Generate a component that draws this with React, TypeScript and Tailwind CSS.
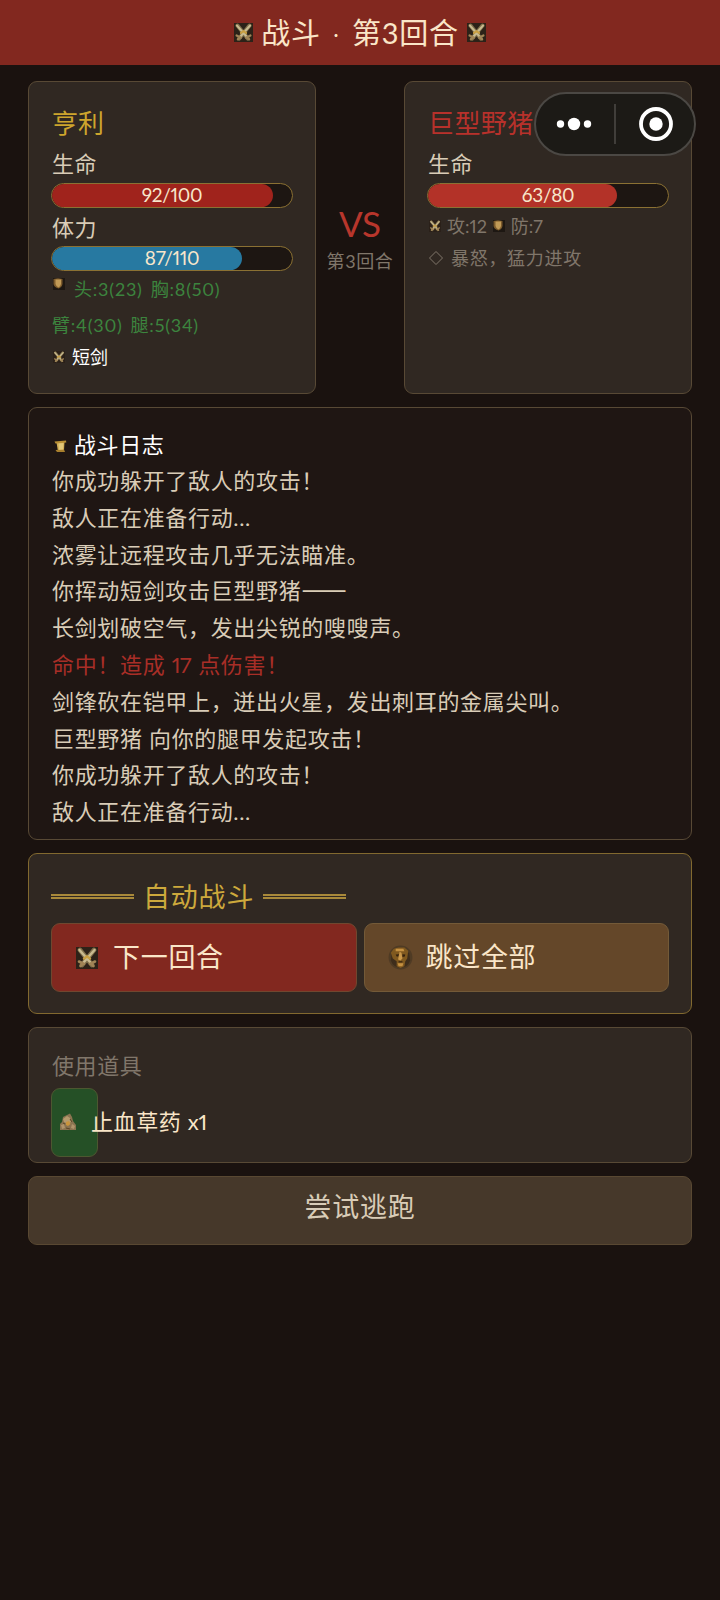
import { ReactNode } from 'react';

type IconProps = { size: number; className?: string };

function SwordsIcon({ size, framed = false, className = '' }: IconProps & { framed?: boolean }) {
  return (
    <svg width={size} height={size} viewBox="0 0 22 22" className={`shrink-0 ${className}`}>
      <rect width="22" height="22" fill={framed ? '#2c2218' : '#2a2019'} />
      <g strokeLinecap="round" fill="none">
        <path d="M4 3 L16 18 M18 3 L6 18" stroke="#81714c" strokeWidth="4.6" />
        <path d="M3.5 3 L14 15 M18.5 3 L8 15" stroke="#c9bb90" strokeWidth="2.4" />
        <path d="M3 14.5 L8 17 M19 14.5 L14 17 M4.5 19 L7 16.5 M17.5 19 L15 16.5" stroke="#a08456" strokeWidth="2.6" />
        <path d="M8 11.5 L11 9.5 L14 11.5" stroke="#c9a043" strokeWidth="2.4" />
      </g>
    </svg>
  );
}

function ShieldIcon({ size, className = '' }: IconProps) {
  return (
    <svg width={size} height={size} viewBox="0 0 12 12" className={`shrink-0 ${className}`}>
      <rect width="12" height="12" fill="#1d1712" />
      <path d="M0.5 1 L5 0.3 L9.5 1 V6 Q9 9 5.5 10.5 Q1 9 0.5 6 Z" fill="#7c5b2c" />
      <path d="M2.5 1.5 H8 V6 Q7.5 8.5 5.5 9.5 Q3 8 2.5 6 Z" fill="#c19a56" />
    </svg>
  );
}

function ScrollIcon() {
  return (
    <svg width="13" height="13" viewBox="0 0 13 13" className="mt-[3px] shrink-0">
      <path d="M2.5 2.5 L10.5 1.5 L10 10.5 L4 11.5 Z" fill="#cfab52" />
      <path d="M0.5 1.6 L12 0.6 L12.3 2.6 L1.5 3.6 Z" fill="#b98f35" />
      <path d="M1.5 10 L10 9.5 L11 12 L3 12 Z" fill="#a87f2d" />
      <path d="M4.5 3.5 L9.5 3 L9 9.5 L5 9.8 Z" fill="#e2c778" />
    </svg>
  );
}

function CoinIcon() {
  return (
    <svg width="25" height="25" viewBox="0 0 26 26" className="shrink-0">
      <circle cx="13" cy="13" r="12.4" fill="#4f3b24" />
      <path d="M3 16 A10.5 10.5 0 0 0 23 16 L22 8 L4 8 Z" fill="#3e2d1b" />
      <path d="M3 8 L6 4 L11 2.5 H17 L21 6 L20 14 L18 17 L17 22 L13 24 L9 22 V17 L5 14 Z" fill="#80591f" />
      <path d="M8 4 H16 L17 6.5 H8 Z M10 19 H16 L15 22 H11 Z" fill="#c59141" />
      <path d="M8 10 L11.5 9.5 L11 12 L9 12 Z M15 9.5 L18 10 L17.5 12 L15 12.5 Z" fill="#35220f" />
      <path d="M12 7 L14 8 L15 14 L13 16 L10.5 15 Z" fill="#c9974a" />
      <path d="M11 17.5 H15" stroke="#35220f" strokeWidth="1.2" />
    </svg>
  );
}

function HerbIcon() {
  return (
    <svg width="18" height="18" viewBox="0 0 18 18" className="shrink-0">
      <path d="M1 17 L1 11 L3 9 L4 4 L8 2 L11 0.5 L13 4 L14 8 L17 12 V17 Z" fill="#8a7350" />
      <path d="M4 6 L8 3 L11 5 L12 9 L9 11 L5 9 Z" fill="#b59a6c" />
      <path d="M7 9 L10 8 L11.5 11 L9 13 L7 12 Z" fill="#c9943c" />
      <path d="M2 12 L5 11 L6 15 L3 16 Z M13 11 L16 13 L15 16 L12 15 Z" fill="#b0946b" />
      <path d="M4 10 L6 11 M11 6 L13 9 M7 15 L11 16" stroke="#5a4526" strokeWidth="1" />
    </svg>
  );
}

function StatBar({ value, max, color }: { value: number; max: number; color: string }) {
  return (
    <div className="relative h-[25px] overflow-hidden rounded-full border border-[#8b7133] bg-[#1d1612]">
      <div className={`h-full rounded-full ${color}`} style={{ width: `${(value / max) * 100}%` }} />
      <span className="absolute inset-0 flex items-center justify-center text-[19px] tracking-[-0.3px] text-[#f7e6cb]">
        {value}/{max}
      </span>
    </div>
  );
}

function Panel({ className, children }: { className: string; children: ReactNode }) {
  return <section className={`rounded-[9px] border px-[22px] ${className}`}>{children}</section>;
}

const LOG = [
  { text: '你成功躲开了敌人的攻击！' },
  { text: '敌人正在准备行动...' },
  { text: '浓雾让远程攻击几乎无法瞄准。' },
  { text: '你挥动短剑攻击巨型野猪——' },
  { text: '长剑划破空气，发出尖锐的嗖嗖声。' },
  { text: '命中！造成 17 点伤害！', hit: true },
  { text: '剑锋砍在铠甲上，迸出火星，发出刺耳的金属尖叫。' },
  { text: '巨型野猪 向你的腿甲发起攻击！' },
  { text: '你成功躲开了敌人的攻击！' },
  { text: '敌人正在准备行动...' },
];

// Dashes take the CJK face so they join up, digits are set tighter
function LogText({ text }: { text: string }) {
  return text.split(/(——|\d+)/).map((part, i) => {
    if (part === '——') {
      return <span key={i} className="font-['Noto_Sans_CJK_SC'] text-[27px] leading-none tracking-normal">{part}</span>;
    }
    if (/^\d+$/.test(part)) {
      return <span key={i} className="mr-[1px] tracking-[-0.6px]">{part}</span>;
    }
    return part;
  });
}

function MiniProgramCapsule() {
  return (
    <div className="absolute left-[534px] top-[92px] flex h-[64px] w-[162px] items-center rounded-full border-2 border-[#4b4844] bg-[#1c1a16]">
      <svg width="158" height="60" viewBox="0 0 158 60">
        <circle cx="24.5" cy="30" r="3.7" fill="#fff" />
        <circle cx="38" cy="30" r="6.2" fill="#fff" />
        <circle cx="51.5" cy="30" r="3.7" fill="#fff" />
        <path d="M79 10 V50" stroke="#4b4844" strokeWidth="1.6" />
        <circle cx="120" cy="30" r="15" fill="none" stroke="#fff" strokeWidth="3.8" />
        <circle cx="120" cy="30" r="6.7" fill="#fff" />
      </svg>
    </div>
  );
}

export default function App() {
  return (
    <div className="relative min-h-[1600px] w-[720px] bg-[#1a120f] font-['Lato','Noto_Sans_CJK_SC',sans-serif] whitespace-nowrap text-[#d9ccb7] proportional-nums">
      <header className="flex h-[65px] items-center justify-center gap-[8px] bg-[#82281f] text-[29px] tracking-[0.8px] text-[#fae6c8]">
        <SwordsIcon size={19} framed />
        <h1>
          战斗<span className="mx-[3px] font-light"> · </span>第3回合
        </h1>
        <SwordsIcon size={19} framed />
      </header>

      <main className="flex flex-col gap-[13px] px-7 pt-4">
        <div className="flex h-[313px]">
          <Panel className="w-[288px] border-[#584935] bg-[#302822] pt-[22px]">
            <h2 className="h-[38px] pl-px text-[26px] leading-[38px] text-[#cda52d]">亨利</h2>
            <div className="h-[41px] pl-px text-[22px] leading-[44px] tracking-[0.6px]">生命</div>
            <StatBar value={92} max={100} color="bg-[#a0231c]" />
            <div className="h-[38px] pl-px text-[22px] leading-[40px] tracking-[0.6px]">体力</div>
            <StatBar value={87} max={110} color="bg-[#2779a1]" />
            <div className="flex h-[36px] text-[18px] leading-[37px] tracking-[0.8px] text-[#3c843e]">
              <ShieldIcon size={12} className="mt-[7px] mr-[9px] ml-[2px]" />
              头:3(23)<span className="ml-[8px]">胸:8(50)</span>
            </div>
            <div className="h-[34px] pl-px text-[18px] leading-[36px] tracking-[0.8px] text-[#3c843e]">
              臂:4(30)<span className="ml-[8px]">腿:5(34)</span>
            </div>
            <div className="flex h-[32px] items-center gap-[7px] text-[18px] text-white">
              <SwordsIcon size={12} className="ml-[2px]" />
              短剑
            </div>
          </Panel>

          <div className="flex w-[88px] flex-col items-center pt-[119px]">
            <div className="text-[35px] leading-[46px] text-[#b8362c]">VS</div>
            <div className="text-[18px] leading-[30px] tracking-[0.6px] text-[#80766a]">第3回合</div>
          </div>

          <Panel className="w-[288px] border-[#584935] bg-[#302822] pt-[22px]">
            <h2 className="h-[38px] pl-px text-[26px] leading-[38px] tracking-[0.4px] text-[#b8312b]">巨型野猪</h2>
            <div className="h-[41px] pl-px text-[22px] leading-[44px] tracking-[0.6px]">生命</div>
            <StatBar value={63} max={80} color="bg-[#b33228]" />
            <div className="flex h-[36px] items-center text-[18px] text-[#80766a]">
              <SwordsIcon size={12} className="mr-[6px] ml-[2px]" />
              攻:12
              <ShieldIcon size={12} className="mx-[6px]" />
              防:7
            </div>
            <div className="flex h-[28px] items-center text-[18px] tracking-[0.7px] text-[#80766a]">
              <svg width="16" height="16" viewBox="0 0 16 16" className="mr-[7px] ml-px">
                <path d="M8 1.5 L14.5 8 L8 14.5 L1.5 8 Z" fill="none" stroke="#80766a" />
              </svg>
              暴怒，猛力进攻
            </div>
          </Panel>
        </div>

        <Panel className="h-[433px] border-[#584935] bg-[#1f1613] pt-[18px]">
          <div className="flex h-[37px] items-center gap-[7px] pl-[3px] text-[22px] tracking-[0.6px] text-white">
            <ScrollIcon />
            战斗日志
          </div>
          {LOG.map((line, i) => (
            <p key={i} className={`h-[36.8px] pl-px text-[22px] leading-[36.8px] tracking-[0.67px] ${line.hit ? 'text-[#a82e27]' : ''}`}>
              <LogText text={line.text} />
            </p>
          ))}
        </Panel>

        <Panel className="h-[161px] border-[#82692f] bg-[#302822] pt-[22px]">
          <div className="flex h-[47px] items-center gap-[9px] pb-1 text-[27px] tracking-[0.8px] text-[#cda93c]">
            <span className="mb-[2px] h-[5px] w-[83px] border-y-2 border-[#a9893a]" />
            自动战斗
            <span className="mb-[2px] h-[5px] w-[83px] border-y-2 border-[#a9893a]" />
          </div>
          <div className="grid grid-cols-2 gap-[7px] text-[27px] tracking-[0.7px] text-[#fae6c8]">
            <button className="flex h-[69px] items-center gap-[15px] rounded-[9px] border border-[#70472f] bg-[#82281f] pl-6">
              <SwordsIcon size={22} framed />
              下一回合
            </button>
            <button className="flex h-[69px] items-center gap-[13px] rounded-[9px] border border-[#735a38] bg-[#644729] pl-[23px]">
              <CoinIcon />
              跳过全部
            </button>
          </div>
        </Panel>

        <Panel className="h-[136px] border-[#584935] bg-[#302822] pt-[19px]">
          <div className="h-[41px] pl-px text-[22px] leading-[38px] tracking-[0.6px] text-[#80766a]">使用道具</div>
          <button className="flex h-[69px] w-[47px] items-center gap-[14px] rounded-[9px] border border-[#4c5730] bg-[#255026] pb-[2px] pl-[7px] text-[22px] tracking-[0.6px] text-[#fae6c8]">
            <HerbIcon />
            <span>
              止血草药 <span className="tracking-[0px]">x1</span>
            </span>
          </button>
        </Panel>

        <button className="h-[69px] rounded-[9px] border border-[#594832] bg-[#46382a] pb-[7px] text-[27px] tracking-[0.7px]">
          尝试逃跑
        </button>
      </main>

      <MiniProgramCapsule />
    </div>
  );
}
